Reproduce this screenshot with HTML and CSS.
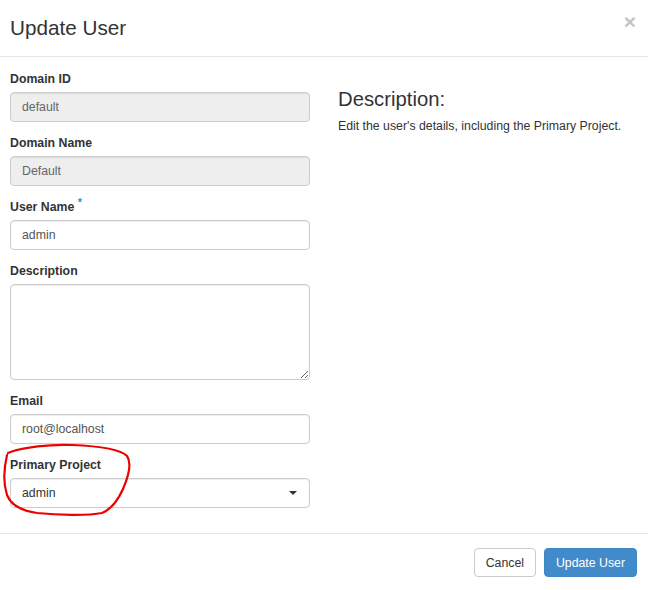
FILE: index.html
```html
<!DOCTYPE html>
<html>
<head>
<meta charset="utf-8">
<title>Update User</title>
<link rel="stylesheet" href="styles.css">
</head>
<body>
<div class="modal">
  <div class="modal-header">
    <h4 class="modal-title">Update User</h4>
    <span class="close">&times;</span>
  </div>
  <div class="modal-body">
    <div class="left">
      <div class="group">
        <label class="label">Domain ID</label>
        <input class="control" type="text" value="default" disabled>
      </div>
      <div class="group">
        <label class="label">Domain Name</label>
        <input class="control" type="text" value="Default" disabled>
      </div>
      <div class="group">
        <label class="label">User Name <span class="req">*</span></label>
        <input class="control" type="text" value="admin">
      </div>
      <div class="group">
        <label class="label">Description</label>
        <textarea class="control area"></textarea>
      </div>
      <div class="group">
        <label class="label">Email</label>
        <input class="control" type="text" value="root@localhost">
      </div>
      <div class="group last">
        <label class="label">Primary Project</label>
        <div class="select-wrap">
          <select class="control select"><option>admin</option></select>
        </div>
      </div>
      <svg class="scribble" width="140" height="80" viewBox="0 0 140 80">
        <path d="M6 10 C 20 4, 50 1, 70 2 C 95 3, 118 6, 125 13 C 130 20, 127 32, 121 46 C 116 57, 110 66, 100 70 C 85 73, 55 72, 35 70 C 20 68, 9 62, 5 52 C 1 40, 2 25, 5 12" fill="none" stroke="#ee0000" stroke-width="2.2" stroke-linecap="round"/>
      </svg>
    </div>
    <div class="right">
      <h3 class="help-title">Description:</h3>
      <p class="help-text">Edit the user's details, including the Primary Project.</p>
    </div>
  </div>
  <div class="modal-footer">
    <button class="btn btn-default">Cancel</button>
    <button class="btn btn-primary">Update User</button>
  </div>
</div>
</body>
</html>
```
FILE: styles.css
```css
* { box-sizing: border-box; }
html, body { margin: 0; padding: 0; background: #fff; }
body {
  font-family: "Liberation Sans", Arial, Helvetica, sans-serif;
  font-size: 12.3px;
  color: #333;
}
.modal { width: 648px; }
.modal-header {
  height: 57px;
  border-bottom: 1px solid #e5e5e5;
  display: flex;
  justify-content: space-between;
  align-items: flex-start;
  padding: 0 12px 0 10px;
}
.modal-title {
  margin: 0;
  font-size: 20.7px;
  font-weight: normal;
  line-height: 56px;
  color: #333;
}
.close {
  font-size: 21px;
  font-weight: bold;
  color: #c4c4c4;
  line-height: 1;
  margin-top: 11px;
}
.modal-body {
  display: flex;
  padding: 14px 10px 25px 10px;
}
.left {
  width: 300px;
  position: relative;
}
.group { margin-bottom: 13px; }
.group.last { margin-bottom: 0; }
.label {
  display: block;
  font-weight: bold;
  font-size: 12.3px;
  line-height: 16px;
  height: 16px;
  margin-bottom: 5px;
  color: #333;
}
.req {
  color: #428bca;
  font-size: 11px;
  line-height: 0;
  position: relative;
  top: -5px;
}
.control {
  display: block;
  width: 300px;
  height: 30px;
  padding: 5px 11px;
  font-family: "Liberation Sans", Arial, Helvetica, sans-serif;
  font-size: 12.3px;
  color: #555;
  background: #fff;
  border: 1px solid #ccc;
  border-radius: 4px;
  box-shadow: inset 0 1px 1px rgba(0,0,0,0.075);
  outline: none;
}
.control:disabled {
  background: #eee;
  color: #666;
  -webkit-text-fill-color: #666;
  opacity: 1;
}
.area { height: 96px; resize: vertical; }
.select-wrap { position: relative; }
.select {
  -webkit-appearance: none;
  appearance: none;
  color: #333;
}
.select-wrap::after {
  content: "";
  position: absolute;
  right: 13px;
  top: 13px;
  border-left: 4px solid transparent;
  border-right: 4px solid transparent;
  border-top: 4px solid #333;
}
.scribble {
  position: absolute;
  left: -8px;
  top: 372px;
  pointer-events: none;
}
.right {
  margin-left: 28px;
  flex: 1;
}
.help-title {
  margin: 17px 0 0 0;
  font-size: 20.3px;
  font-weight: normal;
  line-height: 22px;
  color: #333;
}
.help-text {
  margin: 8px 0 0 0;
  font-size: 12.3px;
  line-height: 17px;
  color: #333;
}
.modal-footer {
  border-top: 1px solid #e5e5e5;
  padding: 14px 11px 14px 10px;
  display: flex;
  justify-content: flex-end;
  gap: 8px;
}
.btn {
  height: 29px;
  padding: 0 11px;
  font-family: "Liberation Sans", Arial, Helvetica, sans-serif;
  font-size: 12.3px;
  border-radius: 4px;
  border: 1px solid #ccc;
  background: #fff;
  color: #333;
}
.btn-primary {
  background: #428bca;
  border-color: #3f87c5;
  color: #fff;
}
```
